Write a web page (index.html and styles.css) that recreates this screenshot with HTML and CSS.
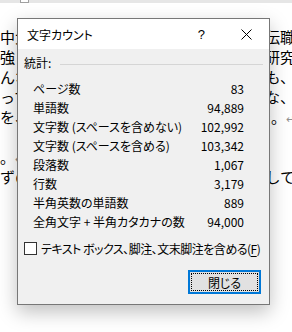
FILE: index.html
```html
<!DOCTYPE html>
<html lang="ja">
<head>
    <meta charset="UTF-8">
    <title>文字カウント</title>
    <link rel="stylesheet" href="styles.css">
</head>
<body>
    <div class="ruler"><span class="ruler-mark"></span></div>
    <div class="doc">
        <div class="line"><span>中大学の</span><span>の伝職</span></div>
        <div class="line"><span>強まる</span><span>の研究</span></div>
        <div class="line"><span>んなに</span><span>ても、</span></div>
        <div class="line"><span>ってい</span><span>そんな、</span></div>
        <div class="line"><span>を、そ</span><span>た。<i>↵</i></span></div>
        <div class="line"><span></span><span></span></div>
        <div class="line"><span>。<i>↵</i></span><span></span></div>
        <div class="line"><span>ずの</span><span>説明して</span></div>
    </div>

    <div class="dialog">
        <div class="titlebar">
            <span class="title">文字カウント</span>
            <span class="help">?</span>
            <svg class="close" width="11" height="11" viewBox="0 0 11 11">
                <path d="M0.5 0.5 L10.5 10.5 M10.5 0.5 L0.5 10.5" stroke="#000" stroke-width="1"/>
            </svg>
        </div>
        <div class="body">
            <div class="heading"><span>統計:</span><span class="rule"></span></div>
            <div class="stats">
                <span>ページ数</span><span class="num">83</span>
                <span>単語数</span><span class="num">94,889</span>
                <span>文字数 (スペースを含めない)</span><span class="num">102,992</span>
                <span>文字数 (スペースを含める)</span><span class="num">103,342</span>
                <span>段落数</span><span class="num">1,067</span>
                <span>行数</span><span class="num">3,179</span>
                <span>半角英数の単語数</span><span class="num">889</span>
                <span>全角文字 + 半角カタカナの数</span><span class="num">94,000</span>
            </div>
            <label class="check"><span class="box"></span><span class="check-text">テキスト ボックス、脚注、文末脚注を含める(<u>F</u>)</span></label>
            <div class="actions">
                <button class="close-btn"><span>閉じる</span></button>
            </div>
        </div>
    </div>
</body>
</html>
```

FILE: styles.css
```css
body {
    margin: 0;
    width: 292px;
    height: 332px;
    overflow: hidden;
    background: #fff;
    font-family: "Noto Sans CJK JP", sans-serif;
    position: relative;
}
.ruler {
    height: 3px;
    background: #e6e6e6;
    position: relative;
}
.ruler-mark {
    display: block;
    margin-left: 20px;
    width: 7px;
    height: 2px;
    background: #fff;
    border: 1px solid #a0a0a0;
    border-top: none;
}
.doc {
    padding-top: 24px;
    font-size: 15px;
    color: #000;
}
.line {
    display: flex;
    justify-content: space-between;
    height: 20px;
    line-height: 20px;
    margin: 0 -3px 0 0;
    white-space: nowrap;
}
.line i {
    font-style: normal;
    color: #909090;
    font-size: 11px;
}
.dialog {
    position: absolute;
    left: 17px;
    top: 18px;
    width: 251px;
    border: 1px solid #777;
    background: #f0f0f0;
    box-shadow: 0 7px 18px rgba(0,0,0,0.25);
    font-size: 12px;
    font-feature-settings: "palt";
    color: #000;
}
.titlebar {
    height: 30px;
    background: #fff;
    display: flex;
    align-items: center;
    padding-left: 9px;
}
.title {
    flex: 1;
    font-size: 12px;
}
.help {
    font-family: "Liberation Sans", sans-serif;
    font-size: 13px;
    margin-right: 36px;
}
.close {
    margin-right: 17px;
}
.body {
    padding: 6px 6px 10px 6px;
}
.heading {
    display: flex;
    align-items: center;
    height: 16px;
    line-height: 16px;
}
.rule {
    flex: 1;
    height: 1px;
    background: #d5d5d5;
    margin-left: 9px;
    margin-top: 2px;
}
.stats {
    display: grid;
    grid-template-columns: 1fr auto;
    margin: 8px 19px 0 9px;
    line-height: 19px;
}
.num {
    text-align: right;
}
.check {
    display: flex;
    align-items: center;
    margin-top: 9px;
    height: 16px;
    white-space: nowrap;
}
.box {
    flex: none;
    width: 11px;
    height: 11px;
    border: 1px solid #333;
    background: #fff;
    margin-right: 4px;
}
.check-text {
    letter-spacing: -0.5px;
}
.check u {
    text-underline-offset: 2px;
}
.actions {
    display: flex;
    justify-content: flex-end;
    margin-top: 14px;
    padding-right: 2px;
}
.close-btn {
    width: 73px;
    height: 24px;
    padding: 1px;
    border: 2px solid #0078d7;
    background: #e1e1e1;
    font-family: inherit;
    font-size: 12px;
    font-feature-settings: "palt";
}
.close-btn span {
    display: flex;
    align-items: center;
    justify-content: center;
    height: 100%;
    border: 1px dotted #000;
    box-sizing: border-box;
}
```
